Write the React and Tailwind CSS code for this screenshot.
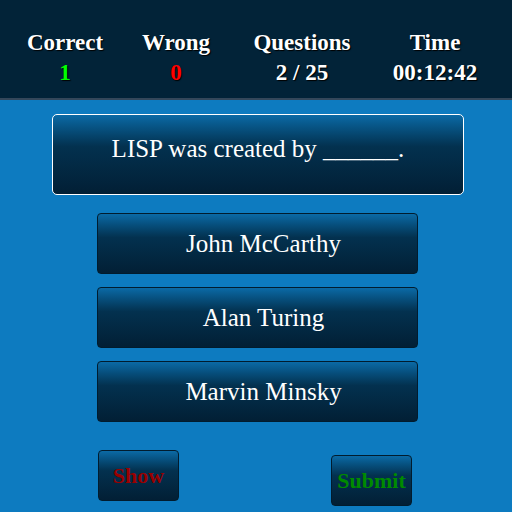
const stats = [
  { label: 'Correct', value: '1', color: 'text-[#00ff00]' },
  { label: 'Wrong', value: '0', color: 'text-[#ff0000]' },
  { label: 'Questions', value: '2 / 25', color: 'text-white' },
  { label: 'Time', value: '00:12:42', color: 'text-white' },
]

const answers = ['John McCarthy', 'Alan Turing', 'Marvin Minsky']

const panel = 'bg-linear-to-b from-[#0b6aa6] via-[#03314f] via-40% to-[#021f35]'

export default function App() {
  return (
    <div className="h-screen w-full bg-[#0d7bc0] font-['Liberation_Serif',serif] text-white">
      {/* Header stats */}
      <header className="h-[100px] bg-[#022338] border-b-2 border-[#34475a] pt-[28px] px-[10px]">
        <div className="grid grid-cols-[110px_112px_140px_126px] font-bold text-[23px] leading-[30px] [text-shadow:1px_1px_1px_#000]">
          {stats.map((s) => (
            <div key={s.label} className="flex flex-col items-center">
              <span>{s.label}</span>
              <span className={s.color}>{s.value}</span>
            </div>
          ))}
        </div>
      </header>

      {/* Question */}
      <div className="flex justify-center pt-[14px] pl-[4px]">
        <div className={`w-[412px] h-[81px] border border-white rounded-[5px] pt-[20px] text-center text-[25px] leading-[28px] ${panel}`}>
          LISP was created by ______.
        </div>
      </div>

      {/* Answers */}
      <div className="flex flex-col items-center gap-[13px] mt-[18px] pl-[3px]">
        {answers.map((a) => (
          <button
            key={a}
            className={`w-[321px] h-[61px] border border-[#011c2e] rounded-[4px] pl-3 text-[25px] leading-[28px] text-white ${panel}`}
          >
            {a}
          </button>
        ))}
      </div>

      {/* Actions */}
      <div className="flex items-start pl-[98px] mt-[28px] font-bold text-[22px]">
        <button className={`w-[81px] h-[51px] border border-[#011c2e] rounded-[4px] text-[#990000] ${panel}`}>
          Show
        </button>
        <button className={`ml-[152px] mt-[5px] w-[81px] h-[51px] border border-[#011c2e] rounded-[4px] text-[#008a00] ${panel}`}>
          Submit
        </button>
      </div>
    </div>
  )
}
